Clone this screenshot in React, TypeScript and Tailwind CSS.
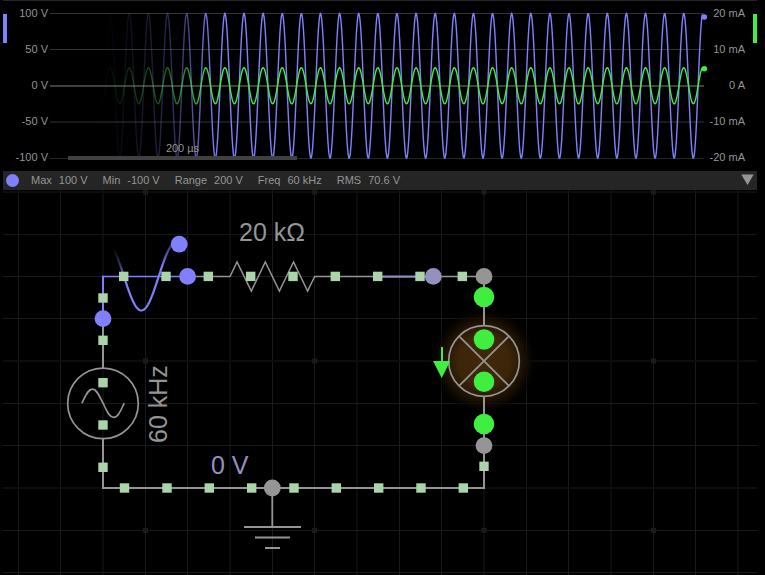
const BLUE = "#8080ff";
const GREEN = "#40ee40";
const GREY = "#959595";
const LAVENDER = "#9490c0";

const voltTicks = ["100 V", "50 V", "0 V", "-50 V", "-100 V"];
const ampTicks = ["20 mA", "10 mA", "0 A", "-10 mA", "-20 mA"];

const stats = [
  { name: "Max", value: "100 V" },
  { name: "Min", value: "-100 V" },
  { name: "Range", value: "200 V" },
  { name: "Freq", value: "60 kHz" },
  { name: "RMS", value: "70.6 V" },
];

const PERIOD = 19.12;
const PEAK_X = 244;

function wave(amplitude: number, from: number, to: number) {
  let d = "";
  for (let x = from; x <= to; x += 0.4) {
    const y = 85.8 - amplitude * Math.cos(((x - PEAK_X) / PERIOD) * 2 * Math.PI);
    d += `${d ? "L" : "M"}${x.toFixed(2)} ${y.toFixed(2)}`;
  }
  return d;
}

function Fade({ id, color, stops }: { id: string; color: string; stops: number[][] }) {
  return (
    <linearGradient id={id} gradientUnits="userSpaceOnUse" x1="100" x2="220" y1="0" y2="0">
      {stops.map(([offset, opacity]) => (
        <stop key={offset} offset={offset} stopColor={color} stopOpacity={opacity} />
      ))}
    </linearGradient>
  );
}

function Plot() {
  return (
    <svg viewBox="48 1 661 170" className="block h-auto w-full" role="img" aria-label="Voltage and current over time">
      <defs>
        <Fade id="fadeV" color={BLUE} stops={[[0, 0], [0.1, 0.03], [0.25, 0.12], [0.4, 0.19], [0.56, 0.3], [0.72, 0.5], [0.88, 0.85], [1, 1]]} />
        <Fade id="fadeA" color={GREEN} stops={[[0, 0], [0.1, 0.06], [0.25, 0.2], [0.4, 0.3], [0.56, 0.42], [0.72, 0.6], [0.88, 0.88], [1, 1]]} />
      </defs>
      <rect x="50" y="13" width="654" height="1" fill="#333333" />
      <rect x="50" y="49" width="654" height="1" fill="#333333" />
      <rect x="50" y="85" width="654" height="2" fill="#3f3f3f" />
      <rect x="50" y="121" width="654" height="2" fill="#1a1a1a" />
      <rect x="50" y="158" width="654" height="1" fill="#242424" />
      <path d={wave(72.3, 100, 702.6)} fill="none" stroke="url(#fadeV)" strokeWidth="1.4" />
      <path d={wave(18, 94, 702.6)} fill="none" stroke="url(#fadeA)" strokeWidth="1.4" />
      <circle cx="704.3" cy="17" r="2.8" fill={BLUE} />
      <circle cx="704.3" cy="68.7" r="2.8" fill={GREEN} />
      <rect x="68" y="156" width="229" height="4" fill="#404040" />
      <text x="182.5" y="152" textAnchor="middle" fontSize="11" fill={GREY}>
        200 µs
      </text>
    </svg>
  );
}

function Ticks({ labels, wide }: { labels: string[]; wide?: boolean }) {
  return (
    <div className={`flex shrink-0 flex-col justify-between whitespace-nowrap pt-1 pb-1.5 text-right ${wide ? "w-[41px]" : "w-9"}`}>
      {labels.map((label) => (
        <span key={label} className="leading-4">
          {label}
        </span>
      ))}
    </div>
  );
}

function Scope() {
  return (
    <section className="flex border-t border-[#252525]">
      <div className="mt-[13px] h-[29px] w-1 shrink-0 bg-[#8080ff]" />
      <Ticks labels={voltTicks} wide />
      <div className="min-w-0 flex-1">
        <Plot />
      </div>
      <Ticks labels={ampTicks} />
      <div className="mt-[13px] ml-2 h-[29px] w-1 shrink-0 bg-[#40ee40]" />
    </section>
  );
}

function StatusBar() {
  return (
    <section className="flex h-[19px] items-center gap-3 bg-[#252525] pr-[3px] pl-[3px]">
      <span className="size-[13px] shrink-0 rounded-full bg-[#8080ff]" />
      <dl className="flex flex-1 gap-[15px] pb-0.5 leading-4">
        {stats.map((s) => (
          <div key={s.name} className="flex gap-[7px] whitespace-nowrap">
            <dt>{s.name}</dt>
            <dd>{s.value}</dd>
          </div>
        ))}
      </dl>
      <button type="button" aria-label="Scope menu" className="block pb-0.5">
        <svg viewBox="0 0 13 11" className="h-[11px] w-[13px]">
          <path d="M0.3 0.5H12.7L6.5 11Z" fill={GREY} />
        </svg>
      </button>
    </section>
  );
}

const columns = Array.from({ length: 18 }, (_, i) => i);
const rows = Array.from({ length: 10 }, (_, i) => i);

const charges = [
  ...[123.7, 166, 208.3, 250.7, 293, 335.3, 377.7, 420, 462.3].map((x) => [x, 276.4]),
  ...[124.5, 167, 209.3, 251.7, 294, 336.3, 378.7, 421, 463.3].map((x) => [x, 488]),
  ...[298, 340.3, 382.7, 425, 467.3].map((y) => [103, y]),
  [484, 466.3],
];

function probeTrace() {
  let d = "";
  for (let x = 113; x <= 174; x += 0.5) {
    const y = 276.5 + 34 * Math.sin(((x - 124) / 34.7) * Math.PI);
    d += `${d ? "L" : "M"}${x} ${y.toFixed(2)}`;
  }
  return d;
}

function Grid() {
  return (
    <g>
      {columns.map((i) => {
        const soft = i % 3 === 2;
        const x = Math.floor(18.4 + i * 42.33);
        return <rect key={i} x={soft ? x - 1 : x} y="190" width={soft ? 2 : 1} height="385" fill={soft ? "#0c0c0c" : "#1a1a1a"} />;
      })}
      {rows.map((i) => {
        const soft = i % 3 === 1;
        const faint = i === 0 || i === 4 || i === 7;
        const y = Math.floor(192 + i * 42.3);
        return <rect key={i} x="3" y={faint ? y - 1 : y} width="754" height={faint ? 2 : 1} fill={faint ? "#0d0d0d" : soft ? "#151515" : "#1a1a1a"} />;
      })}
      {[145.5, 314.7, 484, 653.5].map((x) =>
        [192, 361, 530.4].map((y) => <rect key={`${x}-${y}`} x={x - 2.6} y={y - 2.6} width="5.2" height="5.2" fill="#1a1a1a" />),
      )}
    </g>
  );
}

function Circuit() {
  return (
    <svg viewBox="3 190 754 385" className="block h-auto w-full" role="img" aria-label="Circuit">
      <defs>
        <radialGradient id="glow">
          <stop offset="0" stopColor="#40280a" />
          <stop offset="0.48" stopColor="#3c2509" />
          <stop offset="0.62" stopColor="#2c1b06" />
          <stop offset="0.76" stopColor="#1a0f03" stopOpacity="0.9" />
          <stop offset="0.88" stopColor="#0c0701" stopOpacity="0.6" />
          <stop offset="1" stopColor="#000000" stopOpacity="0" />
        </radialGradient>
        <linearGradient id="trace" gradientUnits="userSpaceOnUse" x1="113" y1="248" x2="126" y2="281">
          <stop offset="0" stopColor={BLUE} stopOpacity="0" />
          <stop offset="0.5" stopColor={BLUE} stopOpacity="0.4" />
          <stop offset="1" stopColor={BLUE} />
        </linearGradient>
        <linearGradient id="lead" gradientUnits="userSpaceOnUse" x1="355" y1="0" x2="382" y2="0">
          <stop offset="0" stopColor={GREY} />
          <stop offset="1" stopColor={LAVENDER} />
        </linearGradient>
      </defs>
      <Grid />
      <circle cx="484" cy="361" r="54" fill="url(#glow)" />

      <g fill="none" stroke={GREY} strokeWidth="2">
        <path d="M103 318V368M103 439V488H484V396.5M484 325.5V276" />
        <path d="M187 276.5H230L237 262L251.3 291L265.3 262L279.4 291L293.5 262L307.6 291L314.7 276.5H355M433 276.5H484" strokeWidth="1.5" />
        <circle cx="103" cy="403.4" r="35.3" strokeWidth="1.7" />
        <path
          d="M81.8 403.2C85.5 396 88 389.2 92.4 389.2C97 389.2 99.5 396.5 103 403.2C106.5 410 109 417.4 113.6 417.4C118 417.4 120.5 411 124.2 403.2"
          strokeWidth="1.7"
        />
        <circle cx="484" cy="361" r="35.3" strokeWidth="1.7" />
        <path d="M459.3 336.3L508.7 385.7M508.7 336.3L459.3 385.7" strokeWidth="1.7" />
        <path d="M272.3 488V527M244 527H301M255 537.5H290M265 548H280" strokeWidth="1.8" />
      </g>
      <rect x="355" y="275.75" width="23" height="1.5" fill="url(#lead)" />
      <rect x="378" y="275.5" width="55" height="2.2" fill={LAVENDER} />
      <path d="M103 318V275.8" stroke={BLUE} strokeWidth="2" />
      <path d="M102 276.5H187" stroke={BLUE} strokeWidth="1.5" />
      <path d={probeTrace()} fill="none" stroke="url(#trace)" strokeWidth="2.2" />

      {charges.map(([x, y]) => (
        <rect key={`${x}-${y}`} x={x - 4.7} y={y - 4.7} width="9.4" height="9.4" fill="#aad4aa" />
      ))}

      {[[103, 318.6], [187.6, 276.4], [179.2, 244.2]].map(([x, y]) => (
        <circle key={x} cx={x} cy={y} r="8.4" fill={BLUE} />
      ))}
      <circle cx="433.3" cy="276.4" r="8.4" fill={LAVENDER} />
      {[[484, 276.4], [484, 445.6], [272.3, 488]].map(([x, y]) => (
        <circle key={y} cx={x} cy={y} r="8.4" fill={GREY} />
      ))}
      {[297, 339.5, 381.7, 424].map((y) => (
        <circle key={y} cx="484" cy={y} r="10.3" fill={GREEN} />
      ))}
      <path d="M441 347H443V361H450.2L441.7 378L433 361H441Z" fill={GREEN} />

      <g fontSize="25" fill={GREY}>
        <text x="239" y="241">20 kΩ</text>
        <text x="211" y="474" fill={LAVENDER}>
          0 V
        </text>
        <text transform="translate(166.5 443) rotate(-90)">60 kHz</text>
      </g>
    </svg>
  );
}

export default function App() {
  return (
    <main className="min-h-screen bg-black pr-2 pl-[3px] font-['Liberation_Sans',Arial,sans-serif] text-[11px] text-[#959595]">
      <Scope />
      <StatusBar />
      <Circuit />
    </main>
  );
}
